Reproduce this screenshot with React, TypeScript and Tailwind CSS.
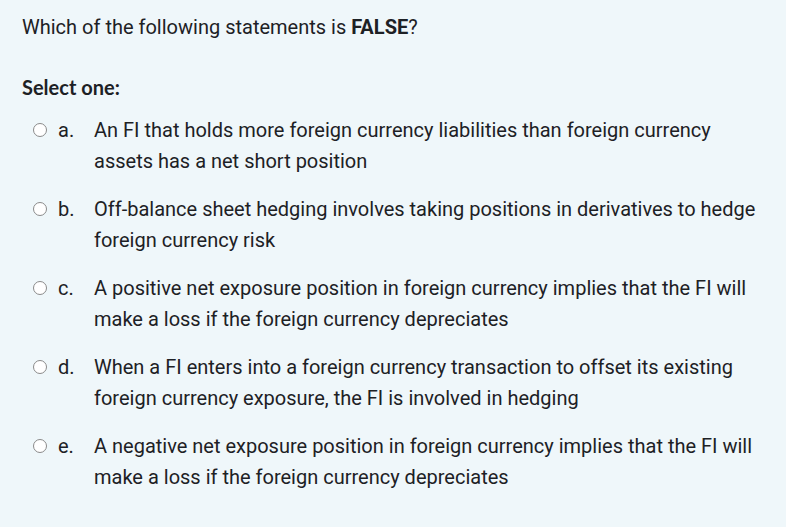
import * as React from "react";

const options = [
  {
    letter: "a.",
    text: "An FI that holds more foreign currency liabilities than foreign currency assets has a net short position",
  },
  {
    letter: "b.",
    text: "Off-balance sheet hedging involves taking positions in derivatives to hedge foreign currency risk",
  },
  {
    letter: "c.",
    text: "A positive net exposure position in foreign currency implies that the FI will make a loss if the foreign currency depreciates",
  },
  {
    letter: "d.",
    text: "When a FI enters into a foreign currency transaction to offset its existing foreign currency exposure, the FI is involved in hedging",
  },
  {
    letter: "e.",
    text: "A negative net exposure position in foreign currency implies that the FI will make a loss if the foreign currency depreciates",
  },
];

export default function App() {
  const [picked, setPicked] = React.useState<string | null>(null);

  return (
    <div className="min-h-[527px] w-[786px] bg-[#eff7fa] text-[#1d2125] font-['Roboto',sans-serif] text-[20px] pl-[22px] pt-[13px]">
      <p className="leading-[28px]">
        Which of the following statements is <strong className="font-bold">FALSE</strong>?
      </p>

      <fieldset className="mt-[32px]">
        <legend className="font-['Lato',sans-serif] font-bold text-[20px] leading-[28px] text-[#1d2125]">
          Select one:
        </legend>

        <div className="mt-[14px] flex flex-col gap-[17px]">
          {options.map((o) => (
            <label key={o.letter} className="flex items-start cursor-pointer">
              <span className="mt-[8px] ml-[11px] w-[14px] h-[14px] shrink-0 rounded-full border-[1.5px] border-[#8a8a8a] bg-white flex items-center justify-center">
                {picked === o.letter && <span className="w-[7px] h-[7px] rounded-full bg-[#0f6cbf]" />}
              </span>
              <input
                type="radio"
                name="answer"
                className="sr-only"
                checked={picked === o.letter}
                onChange={() => setPicked(o.letter)}
              />
              <span className="ml-[11px] w-[36px] shrink-0 leading-[31px]">{o.letter}</span>
              <span className="w-[668px] leading-[31px]">{o.text}</span>
            </label>
          ))}
        </div>
      </fieldset>
    </div>
  );
}
